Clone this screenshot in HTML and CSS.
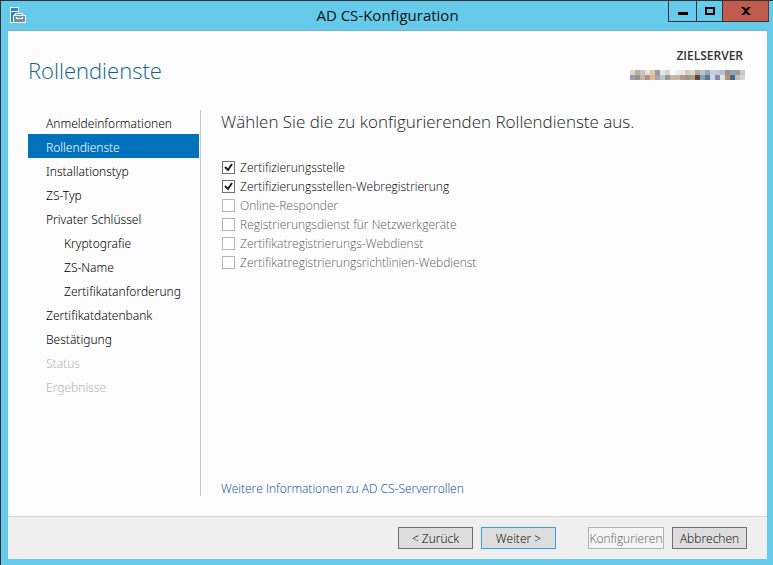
FILE: index.html
```html
<!DOCTYPE html>
<html lang="de">
<head>
  <meta charset="UTF-8">
  <title>AD CS-Konfiguration</title>
  <link rel="stylesheet" href="styles.css">
</head>
<body>
  <div class="window">
    <header class="titlebar">
      <svg class="app-icon" width="16" height="16" viewBox="0 0 16 16" shape-rendering="crispEdges">
        <path fill="#fff" d="M0 0h9v6h4v2h3v8H0z"/>
        <path fill="#1e8bd8" d="M1 1h7v3H1zM1 5h7v1H5v1H4v1H3v7H1z"/>
        <path fill="#7290a6" d="M4 9h11v6H4zM6 7h6v1H6z"/>
        <path fill="#fff" d="M6 10h1v1h5v-1h1v2H6z"/>
      </svg>
      <div class="title">AD CS-Konfiguration</div>
      <div class="window-buttons">
        <button class="win-btn" aria-label="Minimieren">
          <svg width="10" height="8" viewBox="0 0 10 8"><path d="M0 5h10v3H0z"/></svg>
        </button>
        <button class="win-btn max" aria-label="Maximieren">
          <svg width="10" height="8" viewBox="0 0 10 8"><path fill-rule="evenodd" d="M0 0h10v8H0zM2 2v4h6V2z"/></svg>
        </button>
        <button class="win-btn close" aria-label="Schließen">
          <svg width="10" height="8" viewBox="0 0 10 8"><path d="M0 0h3l2 2 2-2h3L6 4l4 4H7L5 6 3 8H0l4-4z"/></svg>
        </button>
      </div>
    </header>

    <main class="wizard">
      <div class="page-head">
        <h1>Rollendienste</h1>
        <div class="target">
          <div class="target-label">ZIELSERVER</div>
          <svg class="target-name" width="115" height="10" viewBox="0 0 23 2" shape-rendering="crispEdges"></svg>
        </div>
      </div>

      <div class="columns">
        <nav class="steps">
          <a href="#">Anmeldeinformationen</a>
          <a href="#" class="active">Rollendienste</a>
          <a href="#">Installationstyp</a>
          <a href="#">ZS-Typ</a>
          <a href="#">Privater Schlüssel</a>
          <a href="#" class="sub">Kryptografie</a>
          <a href="#" class="sub">ZS-Name</a>
          <a href="#" class="sub">Zertifikatanforderung</a>
          <a href="#">Zertifikatdatenbank</a>
          <a href="#">Bestätigung</a>
          <a class="off">Status</a>
          <a class="off">Ergebnisse</a>
        </nav>

        <section class="content">
          <h2>Wählen Sie die zu konfigurierenden Rollendienste aus.</h2>
          <div class="roles">
            <label><input type="checkbox" checked>Zertifizierungsstelle</label>
            <label><input type="checkbox" checked>Zertifizierungsstellen-Webregistrierung</label>
            <label class="off"><input type="checkbox" disabled>Online-Responder</label>
            <label class="off"><input type="checkbox" disabled>Registrierungsdienst für Netzwerkgeräte</label>
            <label class="off"><input type="checkbox" disabled>Zertifikatregistrierungs-Webdienst</label>
            <label class="off"><input type="checkbox" disabled>Zertifikatregistrierungsrichtlinien-Webdienst</label>
          </div>
          <a href="#" class="more">Weitere Informationen zu AD CS-Serverrollen</a>
        </section>
      </div>

      <footer class="actions">
        <button>&lt; Zurück</button>
        <button class="default">Weiter &gt;</button>
        <button class="configure" disabled>Konfigurieren</button>
        <button>Abbrechen</button>
      </footer>
    </main>
  </div>

  <script src="target.js"></script>
</body>
</html>
```
FILE: target.js
```js
// unkenntlich gemachter Servername, zwei Reihen Farbfelder
var rows = [
  'e0d6cf b8aea2 c4c4c4 e9e4d4 dcc7a2 a197a8 dfeaec d9d6cd fcfcfc e4f1fb efe7dc d2cabf e2d9c4 b0abb0 b8c5c8 94a7c1 c6cfdc c4c9d8 b9bdc9 8f9496 97a3a9 a59c98 c9c8cd',
  '939eb2 979289 c5b79b b19094 e0ba8e a8a5b2 bbc8c6 9a9893 c4b9a6 c7b59f b49893 9a9a8a a3a68f 71432c 7fa5c9 6a7379 c0dcf0 8d879a cfe6f7 c28f5b 3e6796 b9c1c4 d9d5c3'
];
var svg = document.querySelector('.target-name');

rows.forEach(function (row, y) {
  row.split(' ').forEach(function (color, x) {
    var rect = document.createElementNS('http://www.w3.org/2000/svg', 'rect');
    rect.setAttribute('x', x);
    rect.setAttribute('y', y);
    rect.setAttribute('width', 1);
    rect.setAttribute('height', 1);
    rect.setAttribute('fill', '#' + color);
    svg.appendChild(rect);
  });
});
```
FILE: styles.css
```css
* {
  box-sizing: border-box;
}
body {
  margin: 0;
  font-family: "Open Sans", "Noto Sans", sans-serif;
  font-size: 12px;
  font-weight: 300;
  color: #000;
}
a {
  color: inherit;
  text-decoration: none;
}
button {
  font-family: inherit;
  font-weight: inherit;
}

/* Fensterrahmen */
.window {
  display: flex;
  flex-direction: column;
  min-height: 100vh;
  padding: 0 6px 6px 7px;
  border-top: 1px solid #333;
  border-left: 1px solid #333;
  background: #66caea;
}
.titlebar {
  display: grid;
  grid-template-columns: 1fr auto 1fr;
  height: 29px;
}
.app-icon {
  margin: 6px 0 0 2px;
}
.title {
  font-size: 15px;
  font-weight: 400;
  line-height: 28px;
  color: #111;
}
.window-buttons {
  display: flex;
  justify-content: flex-end;
  height: 21px;
  margin-right: -2px;
}
.win-btn {
  display: flex;
  align-items: center;
  justify-content: center;
  width: 28px;
  padding: 0;
  border: 1px solid #333;
  border-top: 0;
  border-right: 0;
  background: none;
}
.win-btn.max {
  width: 26px;
}
.win-btn.close {
  width: 47px;
  border-right: 1px solid #5e3631;
  background: #c15b4d;
}

/* Assistent */
.wizard {
  display: flex;
  flex: 1;
  flex-direction: column;
  border-top: 1px solid #7eb0c8;
  background: #fcfcfc;
}
.page-head {
  display: flex;
  justify-content: space-between;
  height: 79px;
  padding: 16px 22px 0 20px;
}
h1 {
  margin: 0;
  font-size: 22px;
  font-weight: 300;
  line-height: 46px;
  color: #10648f;
}
.target {
  display: flex;
  flex-direction: column;
  align-items: flex-end;
}
.target-label {
  margin-right: 2px;
  font-weight: 600;
  line-height: 18px;
  color: #333;
}
.target-name {
  margin-top: 5px;
}
.columns {
  display: flex;
  flex: 1;
  padding: 0 20px 20px;
}
.steps {
  flex: none;
  width: 173px;
  padding-right: 1px;
  border-right: 1px solid #c8c8c8;
  font-family: "Noto Sans", "Open Sans", sans-serif;
}
.steps a {
  display: block;
  height: 24px;
  padding-left: 18px;
  line-height: 28px;
}
.steps .sub {
  padding-left: 36px;
}
.steps .active {
  background: #0072bc;
  color: #fff;
}
.steps .off {
  color: #b4b4b4;
}
.content {
  display: flex;
  flex: 1;
  flex-direction: column;
  padding-left: 20px;
}
h2 {
  margin: 0;
  font-size: 17px;
  font-weight: 300;
  line-height: 24px;
  color: #222;
}
.roles {
  margin-top: 24px;
}
.roles label {
  display: flex;
  align-items: center;
  height: 19px;
}
.roles .off {
  color: #606060;
}
.roles input {
  width: 13px;
  height: 13px;
  margin: 0 5px 0 1px;
  appearance: none;
  border: 1px solid #707070;
  background: #fff;
}
.roles input:checked {
  background: #fff url("data:image/svg+xml,%3Csvg xmlns='http://www.w3.org/2000/svg' viewBox='0 0 11 11'%3E%3Cpath d='M2 5l3 3 4-6' fill='none' stroke='%23212121' stroke-width='2'/%3E%3C/svg%3E");
}
.roles input:disabled {
  border-color: #b4b4b4;
}
.more {
  margin-top: auto;
  line-height: 14px;
  color: #004a9c;
}

/* Schaltflächen unten */
.actions {
  display: flex;
  justify-content: flex-end;
  gap: 8px;
  padding: 10px 20px;
  border-top: 1px solid #d9d9d9;
  background: #efefef;
}
.actions button {
  width: 75px;
  height: 22px;
  padding: 1px 0 0;
  border: 1px solid #707070;
  background: #ddd;
  font-size: 12px;
  line-height: 20px;
  color: #000;
}
.actions .default {
  border-color: #3399ff;
}
.actions .configure {
  width: 76px;
  margin-left: 24px;
  border-color: #adb2b5;
  background: #f4f4f4;
  color: #606060;
}
```
